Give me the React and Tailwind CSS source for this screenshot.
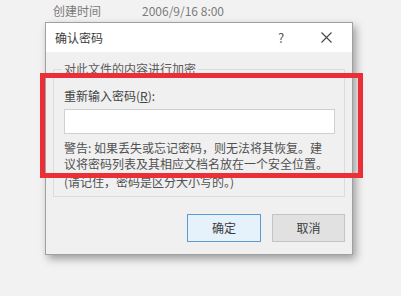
export default function App() {
  const font = { fontFamily: '"Noto Sans CJK SC", "Noto Sans", sans-serif' };

  return (
    <div
      className="relative w-[401px] h-[296px] overflow-hidden bg-[#f2f2f2] text-[12px] leading-none"
      style={font}
    >
      {/* file property row behind the dialog */}
      <div className="flex items-center h-[22px] pl-[53px] text-[#7a7a7a]">
        <span className="w-[89px]">创建时间</span>
        <span>2006/9/16 8:00</span>
      </div>

      {/* dialog */}
      <div className="ml-[45px] w-[308px] h-[233px] flex flex-col border border-[#a0a0a0] bg-[#f0f0f0] shadow-[3px_4px_8px_rgba(0,0,0,0.35)]">
        <div className="h-[29px] shrink-0 flex items-center bg-white pl-[9px] text-[#3c3c3c]">
          <span className="flex-1">确认密码</span>
          <span className="w-[43px] text-[13px] text-[#555]">?</span>
          <span className="w-[31px] flex">
            <svg width="11" height="11" viewBox="0 0 11 11" className="text-[#444]">
              <path d="M0.5 0.5L10.5 10.5M10.5 0.5L0.5 10.5" stroke="currentColor" strokeWidth="1.1" />
            </svg>
          </span>
        </div>

        <div className="flex-1 flex flex-col px-[7px] pt-[17px]">
          {/* group box */}
          <div className="relative h-[128px] border border-[#dcdcdc] px-[10px] pt-[18px] text-[#4a4a4a]">
            <span className="absolute -top-[7px] left-[8px] px-[2px] bg-[#f0f0f0] text-[#5a5a5a]">
              对此文件的内容进行加密
            </span>
            <div className="h-[16px] flex items-center text-[#444]">重新输入密码(<u>R</u>):</div>
            <div className="mt-[5px] w-[271px] h-[25px] bg-white border border-[#d0d0d0]" />
            <div className="mt-[6px] leading-[16px] text-[#505050]">
              <div>警告: 如果丢失或忘记密码，则无法将其恢复。建</div>
              <div>议将密码列表及其相应文档名放在一个安全位置。</div>
              <div className="mt-[2px]">(请记住，密码是区分大小写的。)</div>
            </div>
          </div>

          <div className="flex justify-end gap-[11px] mt-[17px]">
            <button className="w-[74px] h-[28px] bg-[#e5f1fb] border border-[#5b9bd5] text-[#3c3c3c]">
              确定
            </button>
            <button className="w-[73px] h-[28px] bg-[#e1e1e1] border border-[#c4c4c4] text-[#3c3c3c]">
              取消
            </button>
          </div>
        </div>
      </div>

      {/* red annotation frame */}
      <div className="absolute left-[40px] top-[73px] w-[323px] h-[105px] border-[5px] border-[#ec2f37]" />
    </div>
  );
}
